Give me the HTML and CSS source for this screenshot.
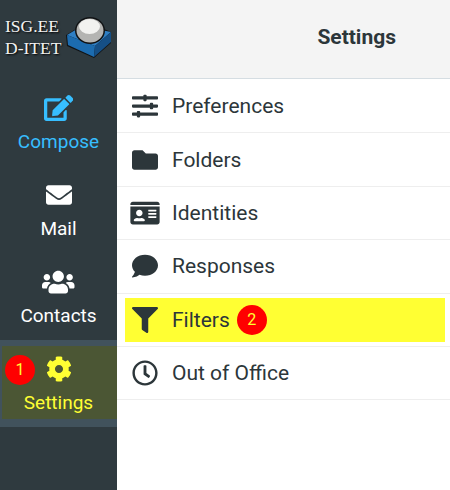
FILE: index.html
```html
<!DOCTYPE html>
<html lang="en">

<head>
    <meta charset="UTF-8">
    <meta name="viewport" content="width=device-width, initial-scale=1.0">
    <title>Settings</title>
    <link rel="stylesheet" href="styles.css">
</head>

<body>
    <div class="layout">
        <nav class="sidebar">
            <div class="brand">
                <div class="brand-text">ISG.EE<br>D-ITET</div>
                <svg class="brand-logo" viewBox="0 0 46 44" width="46" height="44">
                    <path d="M0 20 L10 14 L38 14 L45 17 L45 28 L28 43 L1 31 Z" fill="#111315"/>
                    <path d="M1 20 L16 11 L45 17 L29 31 Z" fill="#2f7fc4"/>
                    <path d="M1 20 L29 31 L28 42 L2 30 Z" fill="#1c6cb0"/>
                    <path d="M29 31 L45 17 L45 27 L28 42 Z" fill="#154f86"/>
                    <ellipse cx="24" cy="15.5" rx="15" ry="13.5" fill="#111315"/>
                    <ellipse cx="24" cy="15.5" rx="13.5" ry="12" fill="#b4b4b2"/>
                    <ellipse cx="23.5" cy="11.5" rx="10.5" ry="7.5" fill="#f2f2f0"/>
                </svg>
            </div>
            <a class="nav-item compose">
                <svg class="nav-icon" viewBox="0 0 576 512"><path d="M402.6 83.2l90.2 90.2c3.8 3.8 3.8 10 0 13.8L274.4 405.6l-92.8 10.3c-12.4 1.4-22.9-9.1-21.5-21.5l10.3-92.8L388.8 83.2c3.8-3.8 10-3.8 13.8 0zm162-22.9l-48.8-48.8c-15.2-15.2-39.9-15.2-55.2 0l-35.4 35.4c-3.8 3.8-3.8 10 0 13.8l90.2 90.2c3.8 3.8 10 3.8 13.8 0l35.4-35.4c15.2-15.3 15.2-40 0-55.2zM384 346.2V448H64V128h229.8c3.2 0 6.2-1.3 8.5-3.5l40-40c7.6-7.6 2.2-20.5-8.5-20.5H48C21.5 64 0 85.5 0 112v352c0 26.5 21.5 48 48 48h352c26.5 0 48-21.5 48-48V306.2c0-10.7-12.9-16-20.5-8.5l-40 40c-2.2 2.3-3.5 5.3-3.5 8.5z"/></svg>
                <span>Compose</span>
            </a>
            <a class="nav-item">
                <svg class="nav-icon" viewBox="0 0 512 512"><path d="M502.3 190.8c3.9-3.1 9.7-.2 9.7 4.7V400c0 26.5-21.5 48-48 48H48c-26.5 0-48-21.5-48-48V195.6c0-5 5.7-7.8 9.7-4.7 22.4 17.4 52.1 39.5 154.1 113.6 21.1 15.4 56.7 47.8 92.2 47.6 35.7.3 72-32.8 92.3-47.6 102-74.1 131.6-96.3 154-113.7zM256 320c23.2.4 56.6-29.2 73.4-41.4 132.7-96.3 142.8-104.7 173.4-128.7 5.8-4.5 9.2-11.5 9.2-18.9v-19c0-26.5-21.5-48-48-48H48C21.5 64 0 85.5 0 112v19c0 7.4 3.4 14.3 9.2 18.9 30.6 23.9 40.7 32.4 173.4 128.7 16.8 12.2 50.2 41.8 73.4 41.4z"/></svg>
                <span>Mail</span>
            </a>
            <a class="nav-item">
                <svg class="nav-icon" viewBox="0 0 640 512"><path d="M96 224c35.3 0 64-28.7 64-64s-28.7-64-64-64-64 28.7-64 64 28.7 64 64 64zm448 0c35.3 0 64-28.7 64-64s-28.7-64-64-64-64 28.7-64 64 28.7 64 64 64zm32 32h-64c-17.6 0-33.5 7.1-45.1 18.6 40.3 22.1 68.9 62 75.1 109.4h66c17.7 0 32-14.3 32-32v-32c0-35.3-28.7-64-64-64zm-256 0c61.9 0 112-50.1 112-112S381.9 32 320 32 208 82.1 208 144s50.1 112 112 112zm76.8 32h-8.3c-20.8 10-43.9 16-68.5 16s-47.6-6-68.5-16h-8.3C179.6 288 128 339.6 128 403.2V432c0 26.5 21.5 48 48 48h288c26.5 0 48-21.5 48-48v-28.8c0-63.6-51.6-115.2-115.2-115.2zm-223.7-13.4C161.5 263.1 145.6 256 128 256H64c-35.3 0-64 28.7-64 64v32c0 17.7 14.3 32 32 32h65.9c6.3-47.4 34.9-87.3 75.2-109.4z"/></svg>
                <span>Contacts</span>
            </a>
            <div class="nav-selected">
                <a class="nav-item settings">
                    <span class="badge badge-one">1</span>
                    <svg class="nav-icon" viewBox="0 0 512 512"><path d="M487.4 315.7l-42.6-24.6c4.3-23.2 4.3-47 0-70.2l42.6-24.6c4.9-2.8 7.1-8.6 5.5-14-11.1-35.6-30-67.8-54.7-94.6-3.8-4.1-10-5.1-14.8-2.3L380.8 110c-17.9-15.4-38.5-27.3-60.8-35.1V25.8c0-5.6-3.9-10.5-9.4-11.7-36.7-8.2-74.3-7.8-109.2 0-5.5 1.2-9.4 6.1-9.4 11.7V75c-22.2 7.9-42.8 19.8-60.8 35.1L88.7 85.5c-4.9-2.8-11-1.9-14.8 2.3-24.7 26.7-43.6 58.9-54.7 94.6-1.7 5.4.6 11.2 5.5 14L67.3 221c-4.3 23.2-4.3 47 0 70.2l-42.6 24.6c-4.9 2.8-7.1 8.6-5.5 14 11.1 35.6 30 67.8 54.7 94.6 3.8 4.1 10 5.1 14.8 2.3l42.6-24.6c17.9 15.4 38.5 27.3 60.8 35.1v49.2c0 5.6 3.9 10.5 9.4 11.7 36.7 8.2 74.3 7.8 109.2 0 5.5-1.2 9.4-6.1 9.4-11.7v-49.2c22.2-7.9 42.8-19.8 60.8-35.1l42.6 24.6c4.9 2.8 11 1.9 14.8-2.3 24.7-26.7 43.6-58.9 54.7-94.6 1.5-5.5-.7-11.3-5.6-14.1zM256 336c-44.1 0-80-35.9-80-80s35.9-80 80-80 80 35.9 80 80-35.9 80-80 80z"/></svg>
                    <span>Settings</span>
                </a>
            </div>
        </nav>

        <main class="content">
            <header class="topbar">
                <h1>Settings</h1>
            </header>
            <ul class="list">
                <li><a class="row">
                    <span class="row-icon"><svg viewBox="0 0 512 512"><path d="M496 384H160v-16c0-8.8-7.2-16-16-16h-32c-8.8 0-16 7.2-16 16v16H16c-8.8 0-16 7.2-16 16v32c0 8.8 7.2 16 16 16h80v16c0 8.8 7.2 16 16 16h32c8.8 0 16-7.2 16-16v-16h336c8.8 0 16-7.2 16-16v-32c0-8.8-7.2-16-16-16zm0-160h-80v-16c0-8.8-7.2-16-16-16h-32c-8.8 0-16 7.2-16 16v16H16c-8.8 0-16 7.2-16 16v32c0 8.8 7.2 16 16 16h336v16c0 8.8 7.2 16 16 16h32c8.8 0 16-7.2 16-16v-16h80c8.8 0 16-7.2 16-16v-32c0-8.8-7.2-16-16-16zm0-160H288V48c0-8.8-7.2-16-16-16h-32c-8.8 0-16 7.2-16 16v16H16C7.2 64 0 71.2 0 80v32c0 8.8 7.2 16 16 16h208v16c0 8.8 7.2 16 16 16h32c8.8 0 16-7.2 16-16v-16h208c8.8 0 16-7.2 16-16V80c0-8.8-7.2-16-16-16z"/></svg></span>
                    Preferences
                </a></li>
                <li><a class="row">
                    <span class="row-icon"><svg viewBox="0 0 512 512"><path d="M464 128H272l-64-64H48C21.49 64 0 85.49 0 112v288c0 26.51 21.49 48 48 48h416c26.51 0 48-21.49 48-48V176c0-26.51-21.49-48-48-48z"/></svg></span>
                    Folders
                </a></li>
                <li><a class="row">
                    <span class="row-icon wide"><svg viewBox="0 0 576 512"><path d="M528 32H48C21.5 32 0 53.5 0 80v16h576V80c0-26.5-21.5-48-48-48zM0 432c0 26.5 21.5 48 48 48h480c26.5 0 48-21.5 48-48V128H0v304zm352-232c0-4.4 3.6-8 8-8h144c4.4 0 8 3.6 8 8v16c0 4.4-3.6 8-8 8H360c-4.4 0-8-3.6-8-8v-16zm0 64c0-4.4 3.6-8 8-8h144c4.4 0 8 3.6 8 8v16c0 4.4-3.6 8-8 8H360c-4.4 0-8-3.6-8-8v-16zm0 64c0-4.4 3.6-8 8-8h144c4.4 0 8 3.6 8 8v16c0 4.4-3.6 8-8 8H360c-4.4 0-8-3.6-8-8v-16zM176 192c35.3 0 64 28.7 64 64s-28.7 64-64 64-64-28.7-64-64 28.7-64 64-64zM67.1 396.2C75.5 370.5 99.6 352 128 352h8.2c12.3 5.1 25.7 8 39.8 8s27.6-2.9 39.8-8h8.2c28.4 0 52.5 18.5 60.9 44.2 3.2 9.9-5.2 19.8-15.6 19.8H82.7c-10.4 0-18.8-10-15.6-19.8z"/></svg></span>
                    Identities
                </a></li>
                <li><a class="row">
                    <span class="row-icon"><svg viewBox="0 0 512 512"><path d="M256 32C114.6 32 0 125.1 0 240c0 49.6 21.4 95 57 130.7C44.5 421.1 2.7 466 2.2 466.5c-2.2 2.3-2.8 5.7-1.5 8.7S4.8 480 8 480c66.3 0 116-31.8 140.6-51.4 32.7 12.3 69 19.4 107.4 19.4 141.4 0 256-93.1 256-208S397.4 32 256 32z"/></svg></span>
                    Responses
                </a></li>
                <li><a class="row marked">
                    <span class="row-icon"><svg viewBox="0 0 512 512"><path d="M487.976 0H24.028C2.71 0-8.047 25.866 7.058 40.971L192 225.941V432c0 7.831 3.821 15.17 10.237 19.662l80 55.98C298.02 518.69 320 507.493 320 487.98V225.941l184.947-184.97C520.021 25.896 509.338 0 487.976 0z"/></svg></span>
                    Filters
                    <span class="badge badge-two">2</span>
                </a></li>
                <li><a class="row">
                    <span class="row-icon"><svg viewBox="0 0 512 512"><path d="M256 8C119 8 8 119 8 256s111 248 248 248 248-111 248-248S393 8 256 8zm0 448c-110.5 0-200-89.5-200-200S145.5 56 256 56s200 89.5 200 200-89.5 200-200 200zm61.8-104.4l-84.9-61.7c-3.1-2.3-4.9-5.9-4.9-9.7V116c0-6.6 5.4-12 12-12h32c6.6 0 12 5.4 12 12v141.7l66.8 48.6c5.4 3.9 6.5 11.4 2.6 16.8L334.6 349c-3.9 5.3-11.4 6.5-16.8 2.6z"/></svg></span>
                    Out of Office
                </a></li>
            </ul>
        </main>
    </div>
</body>

</html>
```

FILE: styles.css
```css
html,
body {
    height: 100%;
}

body {
    margin: 0;
    font-family: Roboto, Arial, sans-serif;
    color: #2c363a;
    background-color: #fff;
    overflow: hidden;
}

.layout {
    display: flex;
    height: 100%;
}

.sidebar {
    width: 117px;
    flex-shrink: 0;
    background-color: #2f3a3f;
    color: #fff;
    display: flex;
    flex-direction: column;
}

.brand {
    height: 79px;
    display: flex;
    align-items: flex-start;
    padding: 15px 0 0 5px;
    box-sizing: border-box;
}

.brand-text {
    width: 61px;
    font-family: "Liberation Serif", serif;
    font-size: 17.5px;
    line-height: 22px;
    color: #f2f2f2;
    text-shadow: 1px 1px 2px #000;
}

.brand-logo {
    flex-shrink: 0;
}

.nav-item {
    height: 87px;
    box-sizing: border-box;
    padding-top: 16px;
    display: flex;
    flex-direction: column;
    align-items: center;
    font-size: 19px;
    line-height: 22px;
    position: relative;
}

.nav-icon {
    height: 26px;
    margin-bottom: 10px;
    fill: currentColor;
}

.compose {
    color: #37beff;
}

.nav-selected {
    height: 87px;
    box-sizing: border-box;
    background-color: #41525c;
    padding: 6px 0 8px 2px;
}

.settings {
    height: 73px;
    padding-top: 10px;
    padding-right: 2px;
    background-color: #4b5634;
    color: #ffff33;
}

.badge {
    width: 30px;
    height: 30px;
    border-radius: 50%;
    background-color: #ff0000;
    color: #ffff33;
    font-size: 16px;
    line-height: 30px;
    text-align: center;
}

.badge-one {
    position: absolute;
    left: 3px;
    top: 9px;
}

.badge-two {
    margin-left: 7px;
}

.content {
    flex: 1;
    min-width: 0;
}

.topbar {
    height: 79px;
    box-sizing: border-box;
    background-color: #f4f4f4;
    border-bottom: 1px solid #d5dde2;
    display: flex;
    align-items: center;
    justify-content: flex-end;
    padding: 0 54px 5px 0;
}

h1 {
    margin: 0;
    font-size: 21px;
    font-weight: 700;
}

.list {
    list-style: none;
    margin: 1px 0 0;
    padding: 0;
}

.list li {
    height: 53.4px;
    box-sizing: border-box;
    border-bottom: 1px solid #eee;
    padding: 4px 5px 4px 8px;
}

.row {
    height: 100%;
    display: flex;
    align-items: center;
    font-size: 21px;
    padding-left: 7px;
}

.row.marked {
    background-color: #ffff33;
}

.row-icon {
    width: 26px;
    margin-right: 14px;
    display: flex;
    justify-content: center;
    flex-shrink: 0;
}

.row-icon svg {
    width: 26px;
    height: 26px;
    fill: #2c363a;
    flex-shrink: 0;
}

.row-icon.wide svg {
    width: 30px;
}
```
